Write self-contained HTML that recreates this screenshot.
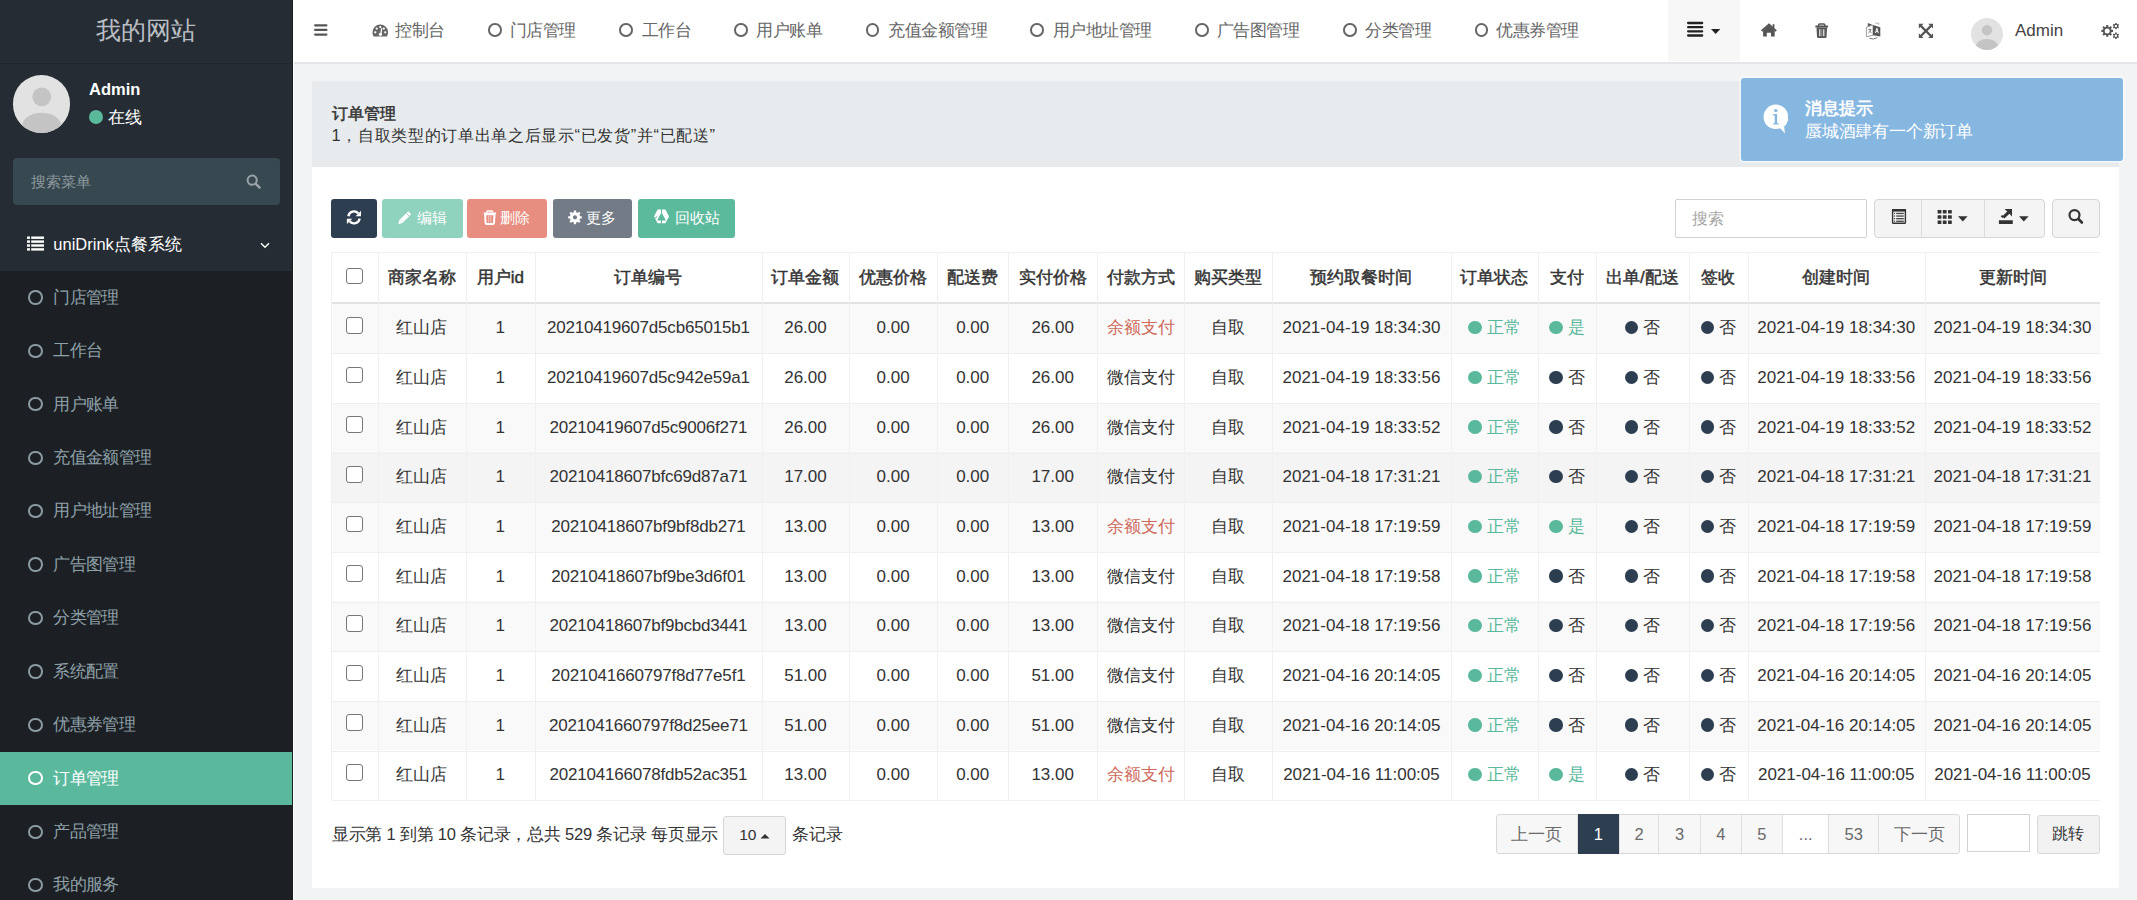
<!DOCTYPE html>
<html><head><meta charset="utf-8">
<style>
*{box-sizing:border-box;margin:0;padding:0}
html,body{width:2137px;height:900px;overflow:hidden}
body{font-family:"Liberation Sans",sans-serif;background:#f1f3f5;color:#333;position:relative}
.abs{position:absolute}
/* sidebar */
#side{position:absolute;left:0;top:0;width:293px;height:900px;background:#252c33;border-right:1px solid #1a1e22;overflow:hidden}
#logo{position:absolute;left:0;top:0;width:292px;height:64px;background:#252c33;border-bottom:1px solid #20262c;color:#b9bec3;font-size:25px;line-height:61px;text-align:center;font-weight:300;letter-spacing:0}
#uavatar{position:absolute;left:12.7px;top:75.2px;width:57.5px;height:57.5px;border-radius:50%;background:#e2e2e2;overflow:hidden}
#uname{position:absolute;left:89px;top:78px;font-size:16.5px;font-weight:bold;color:#fff;line-height:22px}
#ustat{position:absolute;left:89px;top:107px;font-size:17px;color:#fff;line-height:22px}
#ustat i{display:inline-block;width:14px;height:14px;border-radius:50%;background:#5ab99b;vertical-align:-1px;margin-right:5px}
#ssearch{position:absolute;left:13px;top:157.8px;width:267px;height:47px;background:#374850;border-radius:4px}
#ssearch span{position:absolute;left:17.5px;top:0;line-height:47px;font-size:15.4px;color:#8d989d}
#mhead{position:absolute;left:0;top:218px;width:292px;height:53px;color:#fff;font-size:16.5px}
#mhead span{position:absolute;left:53.3px;top:0;line-height:53px}
#sub{position:absolute;left:0;top:270.8px;width:292px;height:700px;background:#1c2024}
.si{position:absolute;left:0;width:292px;height:53.42px;color:#8fa1a9;font-size:16.5px}
.si span{position:absolute;left:53.3px;top:0;line-height:53.42px;letter-spacing:-0.65px}
.si .ring{position:absolute;left:28.4px;top:19.5px;width:14.3px;height:14.3px;border:2.9px solid #8c9ba2;border-radius:50%}
.si.active{background:#5ab99c;color:#fff}
q1{margin-left:0px}q2{margin-right:0px}
.si.active .ring{border-color:#fff}
/* header */
#hdr{position:absolute;left:293px;top:0;width:1844px;height:64px;background:#fff;border-bottom:2px solid #e3e5e8}
.nt{position:absolute;top:0;line-height:60px;font-size:16.5px;letter-spacing:-0.5px;margin-left:-0.8px;color:#666;white-space:nowrap}
.nring{position:absolute;top:23px;width:13.5px;height:13.5px;border:2.7px solid #666;border-radius:50%}
.dash{position:absolute;top:24px}
#hamb{position:absolute;left:314px;top:24px;width:14px;height:12px}
/* panel */
#panel{position:absolute;left:311.5px;top:81px;width:1807.5px;height:807px;background:#fff;border-radius:2px;overflow:hidden}
#ph{position:absolute;left:0;top:0;width:100%;height:86px;background:#e8ebee}
#ph .t1{position:absolute;left:20px;top:20px;font-size:16.4px;font-weight:normal;-webkit-text-stroke:0.5px #333;color:#333;line-height:24px}
#ph .t2{position:absolute;left:20px;top:41.5px;font-size:16.4px;letter-spacing:0.66px;color:#333;line-height:24px}
.btn{position:absolute;top:198.5px;height:39.2px;border-radius:3px;color:#fff;font-size:14.7px;line-height:39px;white-space:nowrap}
.btn svg{position:absolute}
.btn span{position:absolute}
/* table */
#tbl{position:absolute;left:331.5px;top:251.5px;width:1768.5px;height:548.5px;font-size:17px;color:#333}
.c{position:absolute;text-align:center;white-space:nowrap;overflow:hidden}
.idc{letter-spacing:-0.2px}
.th{font-weight:normal;-webkit-text-stroke:0.45px #333;color:#333}
.rowbg{position:absolute;left:0;width:1768.5px}
.odd{background:#f9f9f9}
.even{background:#fff}
.hov{background:#f4f4f4}
.vl{position:absolute;top:0;width:1px;background:#f0f0f0}
.hl{position:absolute;left:0;width:1768.5px;height:1px;background:#efefef}
.hl.hb{height:2px;background:#e2e2e2}
.cb{display:inline-block;width:16.5px;height:16.5px;border:1.2px solid #777;border-radius:3px;background:#fff;vertical-align:middle;position:relative;top:-3.5px}
.red{color:#cf6b5b}
.grn{color:#5ab99c}
.dot{display:inline-block;width:13.5px;height:13.5px;border-radius:50%;vertical-align:-1px;margin-right:5px}
.dot.g{background:#5ab99c}
.dot.d{background:#2c3e50}
.pgi{text-align:center;line-height:38px;font-size:16.5px;color:#6a6a6a}
</style></head><body>
<div id="side">
  <div id="logo">我的网站</div>
  <div id="uavatar"><svg width="57.5" height="57.5" viewBox="0 0 58 58"><circle cx="29" cy="22" r="9.5" fill="#c4c4c4"/><ellipse cx="29" cy="52" rx="20" ry="14" fill="#c4c4c4"/></svg></div>
  <div id="uname">Admin</div>
  <div id="ustat"><i></i>在线</div>
  <div id="ssearch"><span>搜索菜单</span>
    <svg style="position:absolute;left:233px;top:16px" width="15" height="15" viewBox="0 0 15 15"><circle cx="6.2" cy="6.2" r="4.6" fill="none" stroke="#9aa4a9" stroke-width="2"/><path d="M9.6 9.6L13.6 13.6" stroke="#9aa4a9" stroke-width="2.4" stroke-linecap="round"/></svg>
  </div>
  <div id="mhead">
    <svg style="position:absolute;left:27px;top:17.5px" width="17" height="15" viewBox="0 0 17 15"><g fill="#fff"><rect x="0" y="0.5" width="3" height="2.4"/><rect x="4.2" y="0.5" width="12.8" height="2.4"/><rect x="0" y="4.4" width="3" height="2.4"/><rect x="4.2" y="4.4" width="12.8" height="2.4"/><rect x="0" y="8.3" width="3" height="2.4"/><rect x="4.2" y="8.3" width="12.8" height="2.4"/><rect x="0" y="12.2" width="3" height="2.4"/><rect x="4.2" y="12.2" width="12.8" height="2.4"/></g></svg>
    <span>uniDrink点餐系统</span>
    <svg style="position:absolute;left:259.5px;top:24px" width="10" height="7" viewBox="0 0 10 7"><path d="M1 1.2L5 5.2L9 1.2" fill="none" stroke="#fff" stroke-width="1.4"/></svg>
  </div>
  <div id="sub"></div>
<div class="si" style="top:270.80px"><i class="ring"></i><span>门店管理</span></div>
<div class="si" style="top:324.22px"><i class="ring"></i><span>工作台</span></div>
<div class="si" style="top:377.64px"><i class="ring"></i><span>用户账单</span></div>
<div class="si" style="top:431.06px"><i class="ring"></i><span>充值金额管理</span></div>
<div class="si" style="top:484.48px"><i class="ring"></i><span>用户地址管理</span></div>
<div class="si" style="top:537.90px"><i class="ring"></i><span>广告图管理</span></div>
<div class="si" style="top:591.32px"><i class="ring"></i><span>分类管理</span></div>
<div class="si" style="top:644.74px"><i class="ring"></i><span>系统配置</span></div>
<div class="si" style="top:698.16px"><i class="ring"></i><span>优惠券管理</span></div>
<div class="si active" style="top:751.58px"><i class="ring"></i><span>订单管理</span></div>
<div class="si" style="top:805.00px"><i class="ring"></i><span>产品管理</span></div>
<div class="si" style="top:858.42px"><i class="ring"></i><span>我的服务</span></div>
</div>
<div id="hdr"></div>
<div class="abs" style="left:293px;top:0;width:1.2px;height:900px;background:#fff"></div>
<svg id="hamb" class="abs" style="left:314px;top:23.8px" width="14.5" height="12" viewBox="0 0 14.5 12"><g fill="#555"><rect x="0" y="0" width="14" height="2.4" rx="1.2"/><rect x="0" y="4.7" width="14" height="2.4" rx="1.2"/><rect x="0" y="9.5" width="14" height="2.4" rx="1.2"/></g></svg>
<svg class="dash" style="left:371.6px" viewBox="0 0 16 13" width="16.5" height="13"><path d="M8 0.5A7.8 7.8 0 0 0 0.2 8.3c0 1.5.4 2.9 1.1 4.1h13.4c.7-1.2 1.1-2.6 1.1-4.1A7.8 7.8 0 0 0 8 .5z" fill="#666"/><circle cx="3" cy="8.3" r="1.1" fill="#fff"/><circle cx="4.4" cy="4.6" r="1.1" fill="#fff"/><circle cx="8" cy="3.1" r="1.1" fill="#fff"/><circle cx="11.6" cy="4.6" r="1.1" fill="#fff"/><circle cx="13" cy="8.3" r="1.1" fill="#fff"/><path d="M9.6 4.2L8.6 9.3" stroke="#fff" stroke-width="1.3"/><circle cx="8.2" cy="10.3" r="1.6" fill="#fff"/></svg>
<span class="nt" style="left:396px">控制台</span>
<i class="nring" style="left:488.2px"></i>
<span class="nt" style="left:510.7px">门店管理</span>
<i class="nring" style="left:619.3px"></i>
<span class="nt" style="left:642.7px">工作台</span>
<i class="nring" style="left:734.2px"></i>
<span class="nt" style="left:757.2px">用户账单</span>
<i class="nring" style="left:865.8px"></i>
<span class="nt" style="left:888.8px">充值金额管理</span>
<i class="nring" style="left:1030.3px"></i>
<span class="nt" style="left:1053.3px">用户地址管理</span>
<i class="nring" style="left:1195.1px"></i>
<span class="nt" style="left:1217.6px">广告图管理</span>
<i class="nring" style="left:1343.1px"></i>
<span class="nt" style="left:1365.8px">分类管理</span>
<i class="nring" style="left:1474.5px"></i>
<span class="nt" style="left:1497px">优惠券管理</span>
<!-- header right -->
<div class="abs" style="left:1667.8px;top:0;width:72.7px;height:61px;background:#f7f7f7"></div>
<div class="abs" style="left:1971.3px;top:17.8px;width:32px;height:32px;border-radius:50%;background:#e2e2e2;overflow:hidden"><svg width="32" height="32" viewBox="0 0 58 58"><circle cx="29" cy="22" r="9.5" fill="#c4c4c4"/><ellipse cx="29" cy="52" rx="20" ry="14" fill="#c4c4c4"/></svg></div>
<div class="abs" style="left:2015px;top:19px;font-size:17px;line-height:24px;color:#444">Admin</div>

<div id="panel">
  <div id="ph"><div class="t1">订单管理</div><div class="t2">1，自取类型的订单出单之后显示<q1>“</q1>已发货<q2>”</q2>并<q1>“</q1>已配送<q2>”</q2></div></div>
</div>
<!-- toolbar -->
<div class="btn" style="left:331px;width:45.5px;background:#2c3e50">
</div>
<div class="btn" style="left:382px;width:81px;background:#8fd2be">
 <span style="left:34.6px;top:0">编辑</span>
</div>
<div class="btn" style="left:467.4px;width:79.6px;background:#e88e80">
 <span style="left:32.6px;top:0">删除</span>
</div>
<div class="btn" style="left:552.7px;width:79.6px;background:#737b86">
 <span style="left:33px;top:0">更多</span>
</div>
<div class="btn" style="left:638px;width:97.4px;background:#5bb99c">
 <span style="left:36.6px;top:0">回收站</span>
</div>
<!-- toolbar right -->
<div class="abs" style="left:1675.4px;top:198.8px;width:191.5px;height:39px;border:1px solid #d2d2d2;border-radius:2px;background:#fff"><span style="position:absolute;left:16px;top:0;line-height:37px;font-size:15.5px;color:#a5a5a5">搜索</span></div>
<div class="abs" style="left:1874.4px;top:198.8px;width:170.4px;height:39px;border:1px solid #d6d6d6;border-radius:4px;background:#f4f4f4;overflow:hidden">
 <div class="abs" style="left:46px;top:0;width:1px;height:39px;background:#dcdcdc"></div>
 <div class="abs" style="left:108.5px;top:0;width:1px;height:39px;background:#dcdcdc"></div>
 
 
 
</div>
<div class="abs" style="left:2052.4px;top:198.8px;width:47.7px;height:39px;border:1px solid #d6d6d6;border-radius:4px;background:#f4f4f4">
 
</div>
<!-- pagination -->
<div class="abs" style="left:331.8px;top:822px;font-size:16.5px;letter-spacing:-0.22px;line-height:24px;color:#333;white-space:nowrap">显示第 1 到第 10 条记录，总共 529 条记录 每页显示</div>
<div class="abs" style="left:723.2px;top:816.3px;width:62.5px;height:38.3px;border:1px solid #d6d6d6;border-radius:3px;background:#f4f4f4;font-size:15.5px;line-height:36px;color:#333"><span style="position:absolute;left:15px">10</span><svg class="abs" style="left:36px;top:15.5px" width="10" height="6" viewBox="0 0 10 6"><path d="M0.5 5.5L5 1L9.5 5.5z" fill="#333"/></svg></div>
<div class="abs" style="left:792px;top:822px;font-size:16.5px;line-height:24px;color:#333;white-space:nowrap">条记录</div>
<div id="pg" class="abs" style="left:1496px;top:813.8px;width:463.6px;height:40px;border:1px solid #d9d9d9;border-radius:3px;background:#f7f7f7">
<div class="abs pgi" style="left:-1.00px;top:0;width:80.80px;height:38px;">上一页</div>
<div class="abs pgi" style="left:79.80px;top:0;width:42.20px;height:38px;border-left:1px solid #dedede;background:#2c3e50;color:#fff;top:-1px;height:40px;line-height:40px;">1</div>
<div class="abs pgi" style="left:122.00px;top:0;width:39.30px;height:38px;border-left:1px solid #dedede;">2</div>
<div class="abs pgi" style="left:161.30px;top:0;width:41.50px;height:38px;border-left:1px solid #dedede;">3</div>
<div class="abs pgi" style="left:202.80px;top:0;width:40.90px;height:38px;border-left:1px solid #dedede;">4</div>
<div class="abs pgi" style="left:243.70px;top:0;width:41.50px;height:38px;border-left:1px solid #dedede;">5</div>
<div class="abs pgi" style="left:285.20px;top:0;width:46.10px;height:38px;border-left:1px solid #dedede;background:#fff;">...</div>
<div class="abs pgi" style="left:331.30px;top:0;width:49.80px;height:38px;border-left:1px solid #dedede;">53</div>
<div class="abs pgi" style="left:381.10px;top:0;width:81.50px;height:38px;border-left:1px solid #dedede;">下一页</div>
</div>
<div class="abs" style="left:1966.7px;top:813.8px;width:63px;height:38.5px;border:1px solid #d2d2d2;background:#fff"></div>
<div class="abs" style="left:2037px;top:815.3px;width:62.5px;height:38.4px;border:1px solid #d9d9d9;border-radius:3px;background:#f2f2f2;font-size:16px;line-height:36px;text-align:center;color:#333">跳转</div>
<div id="tbl">
<div class="c th" style="left:0.00px;top:0.00px;width:46.00px;height:51.90px;line-height:51.90px"><span class="cb" style="top:-2px"></span></div>
<div class="c th" style="left:46.00px;top:0.00px;width:88.00px;height:51.90px;line-height:51.90px">商家名称</div>
<div class="c th" style="left:134.00px;top:0.00px;width:69.50px;height:51.90px;line-height:51.90px">用户id</div>
<div class="c th" style="left:203.50px;top:0.00px;width:226.70px;height:51.90px;line-height:51.90px">订单编号</div>
<div class="c th" style="left:430.20px;top:0.00px;width:87.60px;height:51.90px;line-height:51.90px">订单金额</div>
<div class="c th" style="left:517.80px;top:0.00px;width:87.70px;height:51.90px;line-height:51.90px">优惠价格</div>
<div class="c th" style="left:605.50px;top:0.00px;width:71.40px;height:51.90px;line-height:51.90px">配送费</div>
<div class="c th" style="left:676.90px;top:0.00px;width:88.60px;height:51.90px;line-height:51.90px">实付价格</div>
<div class="c th" style="left:765.50px;top:0.00px;width:87.40px;height:51.90px;line-height:51.90px">付款方式</div>
<div class="c th" style="left:852.90px;top:0.00px;width:88.00px;height:51.90px;line-height:51.90px">购买类型</div>
<div class="c th" style="left:940.90px;top:0.00px;width:178.10px;height:51.90px;line-height:51.90px">预约取餐时间</div>
<div class="c th" style="left:1119.00px;top:0.00px;width:87.80px;height:51.90px;line-height:51.90px">订单状态</div>
<div class="c th" style="left:1206.80px;top:0.00px;width:57.20px;height:51.90px;line-height:51.90px">支付</div>
<div class="c th" style="left:1264.00px;top:0.00px;width:93.90px;height:51.90px;line-height:51.90px">出单/配送</div>
<div class="c th" style="left:1357.90px;top:0.00px;width:58.10px;height:51.90px;line-height:51.90px">签收</div>
<div class="c th" style="left:1416.00px;top:0.00px;width:177.50px;height:51.90px;line-height:51.90px">创建时间</div>
<div class="c th" style="left:1593.50px;top:0.00px;width:175.00px;height:51.90px;line-height:51.90px">更新时间</div>
<div class="rowbg odd" style="top:51.90px;height:49.66px"></div>
<div class="c " style="left:0.00px;top:51.90px;width:46.00px;height:49.66px;line-height:49.66px"><span class="cb"></span></div>
<div class="c " style="left:46.00px;top:51.90px;width:88.00px;height:49.66px;line-height:49.66px">红山店</div>
<div class="c " style="left:134.00px;top:51.90px;width:69.50px;height:49.66px;line-height:49.66px">1</div>
<div class="c idc" style="left:203.50px;top:51.90px;width:226.70px;height:49.66px;line-height:49.66px">20210419607d5cb65015b1</div>
<div class="c " style="left:430.20px;top:51.90px;width:87.60px;height:49.66px;line-height:49.66px">26.00</div>
<div class="c " style="left:517.80px;top:51.90px;width:87.70px;height:49.66px;line-height:49.66px">0.00</div>
<div class="c " style="left:605.50px;top:51.90px;width:71.40px;height:49.66px;line-height:49.66px">0.00</div>
<div class="c " style="left:676.90px;top:51.90px;width:88.60px;height:49.66px;line-height:49.66px">26.00</div>
<div class="c " style="left:765.50px;top:51.90px;width:87.40px;height:49.66px;line-height:49.66px"><span class="red">余额支付</span></div>
<div class="c " style="left:852.90px;top:51.90px;width:88.00px;height:49.66px;line-height:49.66px">自取</div>
<div class="c " style="left:940.90px;top:51.90px;width:178.10px;height:49.66px;line-height:49.66px">2021-04-19 18:34:30</div>
<div class="c " style="left:1119.00px;top:51.90px;width:87.80px;height:49.66px;line-height:49.66px"><span class="grn"><i class="dot g"></i>正常</span></div>
<div class="c " style="left:1206.80px;top:51.90px;width:57.20px;height:49.66px;line-height:49.66px"><span class="grn"><i class="dot g"></i>是</span></div>
<div class="c " style="left:1264.00px;top:51.90px;width:93.90px;height:49.66px;line-height:49.66px"><i class="dot d"></i>否</div>
<div class="c " style="left:1357.90px;top:51.90px;width:58.10px;height:49.66px;line-height:49.66px"><i class="dot d"></i>否</div>
<div class="c " style="left:1416.00px;top:51.90px;width:177.50px;height:49.66px;line-height:49.66px">2021-04-19 18:34:30</div>
<div class="c " style="left:1593.50px;top:51.90px;width:175.00px;height:49.66px;line-height:49.66px">2021-04-19 18:34:30</div>
<div class="rowbg even" style="top:101.56px;height:49.66px"></div>
<div class="c " style="left:0.00px;top:101.56px;width:46.00px;height:49.66px;line-height:49.66px"><span class="cb"></span></div>
<div class="c " style="left:46.00px;top:101.56px;width:88.00px;height:49.66px;line-height:49.66px">红山店</div>
<div class="c " style="left:134.00px;top:101.56px;width:69.50px;height:49.66px;line-height:49.66px">1</div>
<div class="c idc" style="left:203.50px;top:101.56px;width:226.70px;height:49.66px;line-height:49.66px">20210419607d5c942e59a1</div>
<div class="c " style="left:430.20px;top:101.56px;width:87.60px;height:49.66px;line-height:49.66px">26.00</div>
<div class="c " style="left:517.80px;top:101.56px;width:87.70px;height:49.66px;line-height:49.66px">0.00</div>
<div class="c " style="left:605.50px;top:101.56px;width:71.40px;height:49.66px;line-height:49.66px">0.00</div>
<div class="c " style="left:676.90px;top:101.56px;width:88.60px;height:49.66px;line-height:49.66px">26.00</div>
<div class="c " style="left:765.50px;top:101.56px;width:87.40px;height:49.66px;line-height:49.66px">微信支付</div>
<div class="c " style="left:852.90px;top:101.56px;width:88.00px;height:49.66px;line-height:49.66px">自取</div>
<div class="c " style="left:940.90px;top:101.56px;width:178.10px;height:49.66px;line-height:49.66px">2021-04-19 18:33:56</div>
<div class="c " style="left:1119.00px;top:101.56px;width:87.80px;height:49.66px;line-height:49.66px"><span class="grn"><i class="dot g"></i>正常</span></div>
<div class="c " style="left:1206.80px;top:101.56px;width:57.20px;height:49.66px;line-height:49.66px"><i class="dot d"></i>否</div>
<div class="c " style="left:1264.00px;top:101.56px;width:93.90px;height:49.66px;line-height:49.66px"><i class="dot d"></i>否</div>
<div class="c " style="left:1357.90px;top:101.56px;width:58.10px;height:49.66px;line-height:49.66px"><i class="dot d"></i>否</div>
<div class="c " style="left:1416.00px;top:101.56px;width:177.50px;height:49.66px;line-height:49.66px">2021-04-19 18:33:56</div>
<div class="c " style="left:1593.50px;top:101.56px;width:175.00px;height:49.66px;line-height:49.66px">2021-04-19 18:33:56</div>
<div class="rowbg odd" style="top:151.22px;height:49.66px"></div>
<div class="c " style="left:0.00px;top:151.22px;width:46.00px;height:49.66px;line-height:49.66px"><span class="cb"></span></div>
<div class="c " style="left:46.00px;top:151.22px;width:88.00px;height:49.66px;line-height:49.66px">红山店</div>
<div class="c " style="left:134.00px;top:151.22px;width:69.50px;height:49.66px;line-height:49.66px">1</div>
<div class="c idc" style="left:203.50px;top:151.22px;width:226.70px;height:49.66px;line-height:49.66px">20210419607d5c9006f271</div>
<div class="c " style="left:430.20px;top:151.22px;width:87.60px;height:49.66px;line-height:49.66px">26.00</div>
<div class="c " style="left:517.80px;top:151.22px;width:87.70px;height:49.66px;line-height:49.66px">0.00</div>
<div class="c " style="left:605.50px;top:151.22px;width:71.40px;height:49.66px;line-height:49.66px">0.00</div>
<div class="c " style="left:676.90px;top:151.22px;width:88.60px;height:49.66px;line-height:49.66px">26.00</div>
<div class="c " style="left:765.50px;top:151.22px;width:87.40px;height:49.66px;line-height:49.66px">微信支付</div>
<div class="c " style="left:852.90px;top:151.22px;width:88.00px;height:49.66px;line-height:49.66px">自取</div>
<div class="c " style="left:940.90px;top:151.22px;width:178.10px;height:49.66px;line-height:49.66px">2021-04-19 18:33:52</div>
<div class="c " style="left:1119.00px;top:151.22px;width:87.80px;height:49.66px;line-height:49.66px"><span class="grn"><i class="dot g"></i>正常</span></div>
<div class="c " style="left:1206.80px;top:151.22px;width:57.20px;height:49.66px;line-height:49.66px"><i class="dot d"></i>否</div>
<div class="c " style="left:1264.00px;top:151.22px;width:93.90px;height:49.66px;line-height:49.66px"><i class="dot d"></i>否</div>
<div class="c " style="left:1357.90px;top:151.22px;width:58.10px;height:49.66px;line-height:49.66px"><i class="dot d"></i>否</div>
<div class="c " style="left:1416.00px;top:151.22px;width:177.50px;height:49.66px;line-height:49.66px">2021-04-19 18:33:52</div>
<div class="c " style="left:1593.50px;top:151.22px;width:175.00px;height:49.66px;line-height:49.66px">2021-04-19 18:33:52</div>
<div class="rowbg hov" style="top:200.88px;height:49.66px"></div>
<div class="c " style="left:0.00px;top:200.88px;width:46.00px;height:49.66px;line-height:49.66px"><span class="cb"></span></div>
<div class="c " style="left:46.00px;top:200.88px;width:88.00px;height:49.66px;line-height:49.66px">红山店</div>
<div class="c " style="left:134.00px;top:200.88px;width:69.50px;height:49.66px;line-height:49.66px">1</div>
<div class="c idc" style="left:203.50px;top:200.88px;width:226.70px;height:49.66px;line-height:49.66px">20210418607bfc69d87a71</div>
<div class="c " style="left:430.20px;top:200.88px;width:87.60px;height:49.66px;line-height:49.66px">17.00</div>
<div class="c " style="left:517.80px;top:200.88px;width:87.70px;height:49.66px;line-height:49.66px">0.00</div>
<div class="c " style="left:605.50px;top:200.88px;width:71.40px;height:49.66px;line-height:49.66px">0.00</div>
<div class="c " style="left:676.90px;top:200.88px;width:88.60px;height:49.66px;line-height:49.66px">17.00</div>
<div class="c " style="left:765.50px;top:200.88px;width:87.40px;height:49.66px;line-height:49.66px">微信支付</div>
<div class="c " style="left:852.90px;top:200.88px;width:88.00px;height:49.66px;line-height:49.66px">自取</div>
<div class="c " style="left:940.90px;top:200.88px;width:178.10px;height:49.66px;line-height:49.66px">2021-04-18 17:31:21</div>
<div class="c " style="left:1119.00px;top:200.88px;width:87.80px;height:49.66px;line-height:49.66px"><span class="grn"><i class="dot g"></i>正常</span></div>
<div class="c " style="left:1206.80px;top:200.88px;width:57.20px;height:49.66px;line-height:49.66px"><i class="dot d"></i>否</div>
<div class="c " style="left:1264.00px;top:200.88px;width:93.90px;height:49.66px;line-height:49.66px"><i class="dot d"></i>否</div>
<div class="c " style="left:1357.90px;top:200.88px;width:58.10px;height:49.66px;line-height:49.66px"><i class="dot d"></i>否</div>
<div class="c " style="left:1416.00px;top:200.88px;width:177.50px;height:49.66px;line-height:49.66px">2021-04-18 17:31:21</div>
<div class="c " style="left:1593.50px;top:200.88px;width:175.00px;height:49.66px;line-height:49.66px">2021-04-18 17:31:21</div>
<div class="rowbg odd" style="top:250.54px;height:49.66px"></div>
<div class="c " style="left:0.00px;top:250.54px;width:46.00px;height:49.66px;line-height:49.66px"><span class="cb"></span></div>
<div class="c " style="left:46.00px;top:250.54px;width:88.00px;height:49.66px;line-height:49.66px">红山店</div>
<div class="c " style="left:134.00px;top:250.54px;width:69.50px;height:49.66px;line-height:49.66px">1</div>
<div class="c idc" style="left:203.50px;top:250.54px;width:226.70px;height:49.66px;line-height:49.66px">20210418607bf9bf8db271</div>
<div class="c " style="left:430.20px;top:250.54px;width:87.60px;height:49.66px;line-height:49.66px">13.00</div>
<div class="c " style="left:517.80px;top:250.54px;width:87.70px;height:49.66px;line-height:49.66px">0.00</div>
<div class="c " style="left:605.50px;top:250.54px;width:71.40px;height:49.66px;line-height:49.66px">0.00</div>
<div class="c " style="left:676.90px;top:250.54px;width:88.60px;height:49.66px;line-height:49.66px">13.00</div>
<div class="c " style="left:765.50px;top:250.54px;width:87.40px;height:49.66px;line-height:49.66px"><span class="red">余额支付</span></div>
<div class="c " style="left:852.90px;top:250.54px;width:88.00px;height:49.66px;line-height:49.66px">自取</div>
<div class="c " style="left:940.90px;top:250.54px;width:178.10px;height:49.66px;line-height:49.66px">2021-04-18 17:19:59</div>
<div class="c " style="left:1119.00px;top:250.54px;width:87.80px;height:49.66px;line-height:49.66px"><span class="grn"><i class="dot g"></i>正常</span></div>
<div class="c " style="left:1206.80px;top:250.54px;width:57.20px;height:49.66px;line-height:49.66px"><span class="grn"><i class="dot g"></i>是</span></div>
<div class="c " style="left:1264.00px;top:250.54px;width:93.90px;height:49.66px;line-height:49.66px"><i class="dot d"></i>否</div>
<div class="c " style="left:1357.90px;top:250.54px;width:58.10px;height:49.66px;line-height:49.66px"><i class="dot d"></i>否</div>
<div class="c " style="left:1416.00px;top:250.54px;width:177.50px;height:49.66px;line-height:49.66px">2021-04-18 17:19:59</div>
<div class="c " style="left:1593.50px;top:250.54px;width:175.00px;height:49.66px;line-height:49.66px">2021-04-18 17:19:59</div>
<div class="rowbg even" style="top:300.20px;height:49.66px"></div>
<div class="c " style="left:0.00px;top:300.20px;width:46.00px;height:49.66px;line-height:49.66px"><span class="cb"></span></div>
<div class="c " style="left:46.00px;top:300.20px;width:88.00px;height:49.66px;line-height:49.66px">红山店</div>
<div class="c " style="left:134.00px;top:300.20px;width:69.50px;height:49.66px;line-height:49.66px">1</div>
<div class="c idc" style="left:203.50px;top:300.20px;width:226.70px;height:49.66px;line-height:49.66px">20210418607bf9be3d6f01</div>
<div class="c " style="left:430.20px;top:300.20px;width:87.60px;height:49.66px;line-height:49.66px">13.00</div>
<div class="c " style="left:517.80px;top:300.20px;width:87.70px;height:49.66px;line-height:49.66px">0.00</div>
<div class="c " style="left:605.50px;top:300.20px;width:71.40px;height:49.66px;line-height:49.66px">0.00</div>
<div class="c " style="left:676.90px;top:300.20px;width:88.60px;height:49.66px;line-height:49.66px">13.00</div>
<div class="c " style="left:765.50px;top:300.20px;width:87.40px;height:49.66px;line-height:49.66px">微信支付</div>
<div class="c " style="left:852.90px;top:300.20px;width:88.00px;height:49.66px;line-height:49.66px">自取</div>
<div class="c " style="left:940.90px;top:300.20px;width:178.10px;height:49.66px;line-height:49.66px">2021-04-18 17:19:58</div>
<div class="c " style="left:1119.00px;top:300.20px;width:87.80px;height:49.66px;line-height:49.66px"><span class="grn"><i class="dot g"></i>正常</span></div>
<div class="c " style="left:1206.80px;top:300.20px;width:57.20px;height:49.66px;line-height:49.66px"><i class="dot d"></i>否</div>
<div class="c " style="left:1264.00px;top:300.20px;width:93.90px;height:49.66px;line-height:49.66px"><i class="dot d"></i>否</div>
<div class="c " style="left:1357.90px;top:300.20px;width:58.10px;height:49.66px;line-height:49.66px"><i class="dot d"></i>否</div>
<div class="c " style="left:1416.00px;top:300.20px;width:177.50px;height:49.66px;line-height:49.66px">2021-04-18 17:19:58</div>
<div class="c " style="left:1593.50px;top:300.20px;width:175.00px;height:49.66px;line-height:49.66px">2021-04-18 17:19:58</div>
<div class="rowbg odd" style="top:349.86px;height:49.66px"></div>
<div class="c " style="left:0.00px;top:349.86px;width:46.00px;height:49.66px;line-height:49.66px"><span class="cb"></span></div>
<div class="c " style="left:46.00px;top:349.86px;width:88.00px;height:49.66px;line-height:49.66px">红山店</div>
<div class="c " style="left:134.00px;top:349.86px;width:69.50px;height:49.66px;line-height:49.66px">1</div>
<div class="c idc" style="left:203.50px;top:349.86px;width:226.70px;height:49.66px;line-height:49.66px">20210418607bf9bcbd3441</div>
<div class="c " style="left:430.20px;top:349.86px;width:87.60px;height:49.66px;line-height:49.66px">13.00</div>
<div class="c " style="left:517.80px;top:349.86px;width:87.70px;height:49.66px;line-height:49.66px">0.00</div>
<div class="c " style="left:605.50px;top:349.86px;width:71.40px;height:49.66px;line-height:49.66px">0.00</div>
<div class="c " style="left:676.90px;top:349.86px;width:88.60px;height:49.66px;line-height:49.66px">13.00</div>
<div class="c " style="left:765.50px;top:349.86px;width:87.40px;height:49.66px;line-height:49.66px">微信支付</div>
<div class="c " style="left:852.90px;top:349.86px;width:88.00px;height:49.66px;line-height:49.66px">自取</div>
<div class="c " style="left:940.90px;top:349.86px;width:178.10px;height:49.66px;line-height:49.66px">2021-04-18 17:19:56</div>
<div class="c " style="left:1119.00px;top:349.86px;width:87.80px;height:49.66px;line-height:49.66px"><span class="grn"><i class="dot g"></i>正常</span></div>
<div class="c " style="left:1206.80px;top:349.86px;width:57.20px;height:49.66px;line-height:49.66px"><i class="dot d"></i>否</div>
<div class="c " style="left:1264.00px;top:349.86px;width:93.90px;height:49.66px;line-height:49.66px"><i class="dot d"></i>否</div>
<div class="c " style="left:1357.90px;top:349.86px;width:58.10px;height:49.66px;line-height:49.66px"><i class="dot d"></i>否</div>
<div class="c " style="left:1416.00px;top:349.86px;width:177.50px;height:49.66px;line-height:49.66px">2021-04-18 17:19:56</div>
<div class="c " style="left:1593.50px;top:349.86px;width:175.00px;height:49.66px;line-height:49.66px">2021-04-18 17:19:56</div>
<div class="rowbg even" style="top:399.52px;height:49.66px"></div>
<div class="c " style="left:0.00px;top:399.52px;width:46.00px;height:49.66px;line-height:49.66px"><span class="cb"></span></div>
<div class="c " style="left:46.00px;top:399.52px;width:88.00px;height:49.66px;line-height:49.66px">红山店</div>
<div class="c " style="left:134.00px;top:399.52px;width:69.50px;height:49.66px;line-height:49.66px">1</div>
<div class="c idc" style="left:203.50px;top:399.52px;width:226.70px;height:49.66px;line-height:49.66px">2021041660797f8d77e5f1</div>
<div class="c " style="left:430.20px;top:399.52px;width:87.60px;height:49.66px;line-height:49.66px">51.00</div>
<div class="c " style="left:517.80px;top:399.52px;width:87.70px;height:49.66px;line-height:49.66px">0.00</div>
<div class="c " style="left:605.50px;top:399.52px;width:71.40px;height:49.66px;line-height:49.66px">0.00</div>
<div class="c " style="left:676.90px;top:399.52px;width:88.60px;height:49.66px;line-height:49.66px">51.00</div>
<div class="c " style="left:765.50px;top:399.52px;width:87.40px;height:49.66px;line-height:49.66px">微信支付</div>
<div class="c " style="left:852.90px;top:399.52px;width:88.00px;height:49.66px;line-height:49.66px">自取</div>
<div class="c " style="left:940.90px;top:399.52px;width:178.10px;height:49.66px;line-height:49.66px">2021-04-16 20:14:05</div>
<div class="c " style="left:1119.00px;top:399.52px;width:87.80px;height:49.66px;line-height:49.66px"><span class="grn"><i class="dot g"></i>正常</span></div>
<div class="c " style="left:1206.80px;top:399.52px;width:57.20px;height:49.66px;line-height:49.66px"><i class="dot d"></i>否</div>
<div class="c " style="left:1264.00px;top:399.52px;width:93.90px;height:49.66px;line-height:49.66px"><i class="dot d"></i>否</div>
<div class="c " style="left:1357.90px;top:399.52px;width:58.10px;height:49.66px;line-height:49.66px"><i class="dot d"></i>否</div>
<div class="c " style="left:1416.00px;top:399.52px;width:177.50px;height:49.66px;line-height:49.66px">2021-04-16 20:14:05</div>
<div class="c " style="left:1593.50px;top:399.52px;width:175.00px;height:49.66px;line-height:49.66px">2021-04-16 20:14:05</div>
<div class="rowbg odd" style="top:449.18px;height:49.66px"></div>
<div class="c " style="left:0.00px;top:449.18px;width:46.00px;height:49.66px;line-height:49.66px"><span class="cb"></span></div>
<div class="c " style="left:46.00px;top:449.18px;width:88.00px;height:49.66px;line-height:49.66px">红山店</div>
<div class="c " style="left:134.00px;top:449.18px;width:69.50px;height:49.66px;line-height:49.66px">1</div>
<div class="c idc" style="left:203.50px;top:449.18px;width:226.70px;height:49.66px;line-height:49.66px">2021041660797f8d25ee71</div>
<div class="c " style="left:430.20px;top:449.18px;width:87.60px;height:49.66px;line-height:49.66px">51.00</div>
<div class="c " style="left:517.80px;top:449.18px;width:87.70px;height:49.66px;line-height:49.66px">0.00</div>
<div class="c " style="left:605.50px;top:449.18px;width:71.40px;height:49.66px;line-height:49.66px">0.00</div>
<div class="c " style="left:676.90px;top:449.18px;width:88.60px;height:49.66px;line-height:49.66px">51.00</div>
<div class="c " style="left:765.50px;top:449.18px;width:87.40px;height:49.66px;line-height:49.66px">微信支付</div>
<div class="c " style="left:852.90px;top:449.18px;width:88.00px;height:49.66px;line-height:49.66px">自取</div>
<div class="c " style="left:940.90px;top:449.18px;width:178.10px;height:49.66px;line-height:49.66px">2021-04-16 20:14:05</div>
<div class="c " style="left:1119.00px;top:449.18px;width:87.80px;height:49.66px;line-height:49.66px"><span class="grn"><i class="dot g"></i>正常</span></div>
<div class="c " style="left:1206.80px;top:449.18px;width:57.20px;height:49.66px;line-height:49.66px"><i class="dot d"></i>否</div>
<div class="c " style="left:1264.00px;top:449.18px;width:93.90px;height:49.66px;line-height:49.66px"><i class="dot d"></i>否</div>
<div class="c " style="left:1357.90px;top:449.18px;width:58.10px;height:49.66px;line-height:49.66px"><i class="dot d"></i>否</div>
<div class="c " style="left:1416.00px;top:449.18px;width:177.50px;height:49.66px;line-height:49.66px">2021-04-16 20:14:05</div>
<div class="c " style="left:1593.50px;top:449.18px;width:175.00px;height:49.66px;line-height:49.66px">2021-04-16 20:14:05</div>
<div class="rowbg even" style="top:498.84px;height:49.66px"></div>
<div class="c " style="left:0.00px;top:498.84px;width:46.00px;height:49.66px;line-height:49.66px"><span class="cb"></span></div>
<div class="c " style="left:46.00px;top:498.84px;width:88.00px;height:49.66px;line-height:49.66px">红山店</div>
<div class="c " style="left:134.00px;top:498.84px;width:69.50px;height:49.66px;line-height:49.66px">1</div>
<div class="c idc" style="left:203.50px;top:498.84px;width:226.70px;height:49.66px;line-height:49.66px">202104166078fdb52ac351</div>
<div class="c " style="left:430.20px;top:498.84px;width:87.60px;height:49.66px;line-height:49.66px">13.00</div>
<div class="c " style="left:517.80px;top:498.84px;width:87.70px;height:49.66px;line-height:49.66px">0.00</div>
<div class="c " style="left:605.50px;top:498.84px;width:71.40px;height:49.66px;line-height:49.66px">0.00</div>
<div class="c " style="left:676.90px;top:498.84px;width:88.60px;height:49.66px;line-height:49.66px">13.00</div>
<div class="c " style="left:765.50px;top:498.84px;width:87.40px;height:49.66px;line-height:49.66px"><span class="red">余额支付</span></div>
<div class="c " style="left:852.90px;top:498.84px;width:88.00px;height:49.66px;line-height:49.66px">自取</div>
<div class="c " style="left:940.90px;top:498.84px;width:178.10px;height:49.66px;line-height:49.66px">2021-04-16 11:00:05</div>
<div class="c " style="left:1119.00px;top:498.84px;width:87.80px;height:49.66px;line-height:49.66px"><span class="grn"><i class="dot g"></i>正常</span></div>
<div class="c " style="left:1206.80px;top:498.84px;width:57.20px;height:49.66px;line-height:49.66px"><span class="grn"><i class="dot g"></i>是</span></div>
<div class="c " style="left:1264.00px;top:498.84px;width:93.90px;height:49.66px;line-height:49.66px"><i class="dot d"></i>否</div>
<div class="c " style="left:1357.90px;top:498.84px;width:58.10px;height:49.66px;line-height:49.66px"><i class="dot d"></i>否</div>
<div class="c " style="left:1416.00px;top:498.84px;width:177.50px;height:49.66px;line-height:49.66px">2021-04-16 11:00:05</div>
<div class="c " style="left:1593.50px;top:498.84px;width:175.00px;height:49.66px;line-height:49.66px">2021-04-16 11:00:05</div>
<div class="hl" style="top:0px"></div>
<div class="hl hb" style="top:50.90px"></div>
<div class="hl" style="top:101.86px"></div>
<div class="hl" style="top:151.52px"></div>
<div class="hl" style="top:201.18px"></div>
<div class="hl" style="top:250.84px"></div>
<div class="hl" style="top:300.50px"></div>
<div class="hl" style="top:350.16px"></div>
<div class="hl" style="top:399.82px"></div>
<div class="hl" style="top:449.48px"></div>
<div class="hl" style="top:499.14px"></div>
<div class="hl" style="top:548.80px"></div>
<div class="vl" style="left:-0.50px;height:548.50px"></div>
<div class="vl" style="left:46.00px;height:548.50px"></div>
<div class="vl" style="left:134.00px;height:548.50px"></div>
<div class="vl" style="left:203.50px;height:548.50px"></div>
<div class="vl" style="left:430.20px;height:548.50px"></div>
<div class="vl" style="left:517.80px;height:548.50px"></div>
<div class="vl" style="left:605.50px;height:548.50px"></div>
<div class="vl" style="left:676.90px;height:548.50px"></div>
<div class="vl" style="left:765.50px;height:548.50px"></div>
<div class="vl" style="left:852.90px;height:548.50px"></div>
<div class="vl" style="left:940.90px;height:548.50px"></div>
<div class="vl" style="left:1119.00px;height:548.50px"></div>
<div class="vl" style="left:1206.80px;height:548.50px"></div>
<div class="vl" style="left:1264.00px;height:548.50px"></div>
<div class="vl" style="left:1357.90px;height:548.50px"></div>
<div class="vl" style="left:1416.00px;height:548.50px"></div>
<div class="vl" style="left:1593.50px;height:548.50px"></div>
</div>

<div class="abs" style="left:1741.2px;top:77.5px;width:381.7px;height:83.8px;background:#86b7e1;border-radius:3px;color:#fff;box-shadow:0 0 0 1.5px rgba(255,255,255,0.55)">
 <svg class="abs" style="left:21.6px;top:26.2px" width="25.5" height="31" viewBox="0 0 25.5 31"><path fill="#fff" d="M12.7 0.5A12.3 12.3 0 0 0 0.5 12.8c0 6.8 5.5 12.3 12.2 12.3 1.6 0 3.1-.3 4.5-.9l4.8 5.3-.9-6.8a12.3 12.3 0 0 0 4.1-9.9A12.3 12.3 0 0 0 12.7.5z"/><circle cx="12.8" cy="6.6" r="1.7" fill="#86b7e1"/><path d="M10.2 10h3.9v9.2h1.6v1.4H10.2v-1.4h1.5v-7.8h-1.5z" fill="#86b7e1"/></svg>
 <div class="abs" style="left:63.8px;top:19.5px;font-size:16.5px;font-weight:bold;line-height:22px;white-space:nowrap">消息提示</div>
 <div class="abs" style="left:63.8px;top:42.5px;font-size:16.5px;letter-spacing:-0.2px;line-height:22px;white-space:nowrap">蜃城酒肆有一个新订单</div>
</div>
<svg class="abs" style="left:0;top:0;pointer-events:none" width="2137" height="900" viewBox="0 0 2137 900">
<rect x="1687" y="21.85" width="16.3" height="2.3" rx="1.1" fill="#222"/>
<rect x="1687" y="26.05" width="16.3" height="2.3" rx="1.1" fill="#222"/>
<rect x="1687" y="30.15" width="16.3" height="2.3" rx="1.1" fill="#222"/>
<rect x="1687" y="34.35" width="16.3" height="2.3" rx="1.1" fill="#222"/>
<path d="M1711 29H1720.3L1715.65 34Z" fill="#222"/>
<path d="M1761.6 31L1769 24.6L1776.2 31" fill="none" stroke="#555" stroke-width="1.9"/>
<rect x="1772.6" y="24.2" width="1.8" height="3.8" fill="#555"/>
<path d="M1763.1 30.4L1769 25.6L1774.7 30.4V36.6H1771V32.7H1766.8V36.6H1763.1Z" fill="#555"/>
<path d="M1818.6 25.9V24.9Q1818.6 23.9 1819.6 23.9H1823.8Q1824.8 23.9 1824.8 24.9V25.9" fill="none" stroke="#555" stroke-width="1.5"/>
<rect x="1815.3" y="25.6" width="12.8" height="1.9" rx="0.5" fill="#555"/>
<path d="M1816.5 27.4H1827.1L1826.5 37Q1826.4 38 1825.4 38H1818.2Q1817.2 38 1817.1 37Z" fill="#555"/>
<path d="M1819.8 29.2V36.3M1823.8 29.2V36.3" stroke="#fff" stroke-width="1.1"/>
<path d="M1821.8 29.2V36.3" stroke="#aaa" stroke-width="0.8"/>
<path d="M1866.4 27.3L1873 25.1V35.3L1866.4 36.7Z" fill="#fff" stroke="#888" stroke-width="0.8"/>
<path d="M1867.8 22.9V26.5L1872.3 24.7Z" fill="#555"/>
<path d="M1873 24.9L1880.3 27.2V36.6L1873 35.3Z" fill="#555"/>
<path d="M1875 32.9L1876.4 28.1H1877.4L1878.8 33.3H1877.8L1877.5 32.1H1876.3L1876 32.9ZM1876.5 31.2H1877.3L1876.9 29.5Z" fill="#fff"/>
<path d="M1868.2 29.6H1871.4M1869.8 28.7V29.6M1870.8 29.6Q1870.2 31.8 1868.4 33.2M1869.2 30.6Q1870 32.2 1871.6 32.8" fill="none" stroke="#666" stroke-width="0.75"/>
<path d="M1875.2 23.3L1878.8 23V25.2" fill="none" stroke="#999" stroke-width="0.7"/>
<path d="M1869.4 38.2Q1873.2 40.2 1877.4 37.6" fill="none" stroke="#777" stroke-width="1"/>
<g fill="#555"><path d="M1918.8 23.8H1923.6L1918.8 28.6Z"/><path d="M1933 23.8V28.6L1928.2 23.8Z"/><path d="M1918.8 38V33.2L1923.6 38Z"/><path d="M1933 38H1928.2L1933 33.2Z"/></g>
<path d="M1920.6 25.6L1931.2 36.2M1931.2 25.6L1920.6 36.2" stroke="#555" stroke-width="2.3"/>
<path fill-rule="evenodd" fill="#555" d="M2111.47 29.86 L2113.01 29.86 L2113.01 31.94 L2111.47 31.94 L2110.96 33.18 L2112.04 34.27 L2110.57 35.74 L2109.48 34.66 L2108.24 35.17 L2108.24 36.71 L2106.16 36.71 L2106.16 35.17 L2104.92 34.66 L2103.83 35.74 L2102.36 34.27 L2103.44 33.18 L2102.93 31.94 L2101.39 31.94 L2101.39 29.86 L2102.93 29.86 L2103.44 28.62 L2102.36 27.53 L2103.83 26.06 L2104.92 27.14 L2106.16 26.63 L2106.16 25.09 L2108.24 25.09 L2108.24 26.63 L2109.48 27.14 L2110.57 26.06 L2112.04 27.53 L2110.96 28.62ZM2109.70 30.90A2.5 2.5 0 1 0 2104.70 30.90A2.5 2.5 0 1 0 2109.70 30.90Z"/>
<path fill-rule="evenodd" fill="#555" d="M2118.16 26.51 L2119.09 26.95 L2118.23 28.43 L2117.38 27.86 L2116.68 28.26 L2116.75 29.29 L2115.05 29.29 L2115.12 28.26 L2114.42 27.86 L2113.57 28.43 L2112.71 26.95 L2113.64 26.51 L2113.64 25.69 L2112.71 25.25 L2113.57 23.77 L2114.42 24.34 L2115.12 23.94 L2115.05 22.91 L2116.75 22.91 L2116.68 23.94 L2117.38 24.34 L2118.23 23.77 L2119.09 25.25 L2118.16 25.69ZM2117.10 26.10A1.2 1.2 0 1 0 2114.70 26.10A1.2 1.2 0 1 0 2117.10 26.10Z"/>
<path fill-rule="evenodd" fill="#555" d="M2118.16 36.21 L2119.09 36.65 L2118.23 38.13 L2117.38 37.56 L2116.68 37.96 L2116.75 38.99 L2115.05 38.99 L2115.12 37.96 L2114.42 37.56 L2113.57 38.13 L2112.71 36.65 L2113.64 36.21 L2113.64 35.39 L2112.71 34.95 L2113.57 33.47 L2114.42 34.04 L2115.12 33.64 L2115.05 32.61 L2116.75 32.61 L2116.68 33.64 L2117.38 34.04 L2118.23 33.47 L2119.09 34.95 L2118.16 35.39ZM2117.10 35.80A1.2 1.2 0 1 0 2114.70 35.80A1.2 1.2 0 1 0 2117.10 35.80Z"/>
<g fill="none" stroke="#fff" stroke-width="2.4"><path d="M348.4 216.2A5.6 5.6 0 0 1 358.2 213.4"/><path d="M359.6 218.6A5.6 5.6 0 0 1 349.8 221.4"/></g>
<path d="M361 210.8V216.2H355.6Z" fill="#fff"/><path d="M346.9 224.1V218.7H352.3Z" fill="#fff"/>
<path d="M408.2 211.2L411.2 214.2L402.4 223L398.2 224.2L399.4 220Z" fill="#fff"/>
<path d="M406.2 213.2L409.2 216.2" stroke="#8fd2be" stroke-width="0.9"/>
<path d="M400.4 219.8L402.6 222" stroke="#b8e2d5" stroke-width="0.7"/>
<path d="M486.8 212.6V211.9Q486.8 210.9 487.8 210.9H491.6Q492.6 210.9 492.6 211.9V212.6" fill="none" stroke="#fff" stroke-width="1.5"/>
<rect x="483.7" y="212.4" width="12.2" height="1.9" rx="0.4" fill="#fff"/>
<path d="M485.1 214.2H494.5L494 223.2Q493.9 224.1 493 224.1H486.6Q485.7 224.1 485.6 223.2Z" fill="none" stroke="#fff" stroke-width="2"/>
<path d="M488.6 215.6V222.6M490.8 215.6V222.6" stroke="#fff" stroke-width="0.7" opacity="0.7"/>
<path fill-rule="evenodd" fill="#fff" d="M573.83 212.28 L573.87 210.54 L576.13 210.54 L576.17 212.28 L577.75 212.94 L579.01 211.74 L580.61 213.34 L579.41 214.60 L580.07 216.18 L581.81 216.22 L581.81 218.48 L580.07 218.52 L579.41 220.10 L580.61 221.36 L579.01 222.96 L577.75 221.76 L576.17 222.42 L576.13 224.16 L573.87 224.16 L573.83 222.42 L572.25 221.76 L570.99 222.96 L569.39 221.36 L570.59 220.10 L569.93 218.52 L568.19 218.48 L568.19 216.22 L569.93 216.18 L570.59 214.60 L569.39 213.34 L570.99 211.74 L572.25 212.94ZM577.10 217.35A2.1 2.1 0 1 0 572.90 217.35A2.1 2.1 0 1 0 577.10 217.35Z"/>
<rect x="1892.6" y="209.6" width="12.8" height="13.6" rx="0.8" fill="none" stroke="#333" stroke-width="1.4"/>
<rect x="1892" y="209" width="14" height="2.6" fill="#333"/>
<rect x="1894" y="212.8" width="1.1" height="1.2" fill="#444"/><rect x="1896.2" y="212.8" width="7.6" height="1.3" fill="#444"/>
<rect x="1894" y="215.4" width="1.1" height="1.2" fill="#444"/><rect x="1896.2" y="215.4" width="7.6" height="1.3" fill="#444"/>
<rect x="1894" y="218.0" width="1.1" height="1.2" fill="#444"/><rect x="1896.2" y="218.0" width="7.6" height="1.3" fill="#444"/>
<rect x="1894" y="220.6" width="1.1" height="1.2" fill="#444"/><rect x="1896.2" y="220.6" width="7.6" height="1.3" fill="#444"/>
<rect x="1937.6" y="210.0" width="3.8" height="3.6" rx="0.4" fill="#333"/>
<rect x="1937.6" y="215.2" width="3.8" height="3.6" rx="0.4" fill="#333"/>
<rect x="1937.6" y="220.4" width="3.8" height="3.6" rx="0.4" fill="#333"/>
<rect x="1942.8" y="210.0" width="3.8" height="3.6" rx="0.4" fill="#333"/>
<rect x="1942.8" y="215.2" width="3.8" height="3.6" rx="0.4" fill="#333"/>
<rect x="1942.8" y="220.4" width="3.8" height="3.6" rx="0.4" fill="#333"/>
<rect x="1948.0" y="210.0" width="3.8" height="3.6" rx="0.4" fill="#333"/>
<rect x="1948.0" y="215.2" width="3.8" height="3.6" rx="0.4" fill="#333"/>
<rect x="1948.0" y="220.4" width="3.8" height="3.6" rx="0.4" fill="#333"/>
<path d="M1958 216.2H1967.6L1962.8 221.6Z" fill="#333"/>
<rect x="1998.9" y="220.2" width="13.9" height="3.7" rx="0.4" fill="#333"/>
<path d="M2012 208.9V216.4L2009.4 213.8L2004.4 218.6L2002.2 216.4L2007.2 211.6L2004.6 208.9Z" fill="#333"/>
<path d="M2001.4 215.6L2003.2 217.4" stroke="#333" stroke-width="2"/>
<path d="M2019 216.2H2028.6L2023.8 221.6Z" fill="#333"/>
<circle cx="2074.5" cy="215.1" r="5.0" fill="none" stroke="#333" stroke-width="2.2"/>
<path d="M2078.4 219L2081.9 222.5" stroke="#333" stroke-width="2.6" stroke-linecap="round"/>
<path fill-rule="evenodd" fill="#fff" d="M654 216.4L657.6 209.5H665.4L669 216.4L665.4 223.3H657.6Z M661.5 212.2L657.1 220.4H665.9Z"/>
<path d="M661.5 209.3V212.8M661.5 219.6V223.6M657.2 216.6L654.4 218.4" stroke="#5bb99c" stroke-width="1.1"/>
</svg>
</body></html>
